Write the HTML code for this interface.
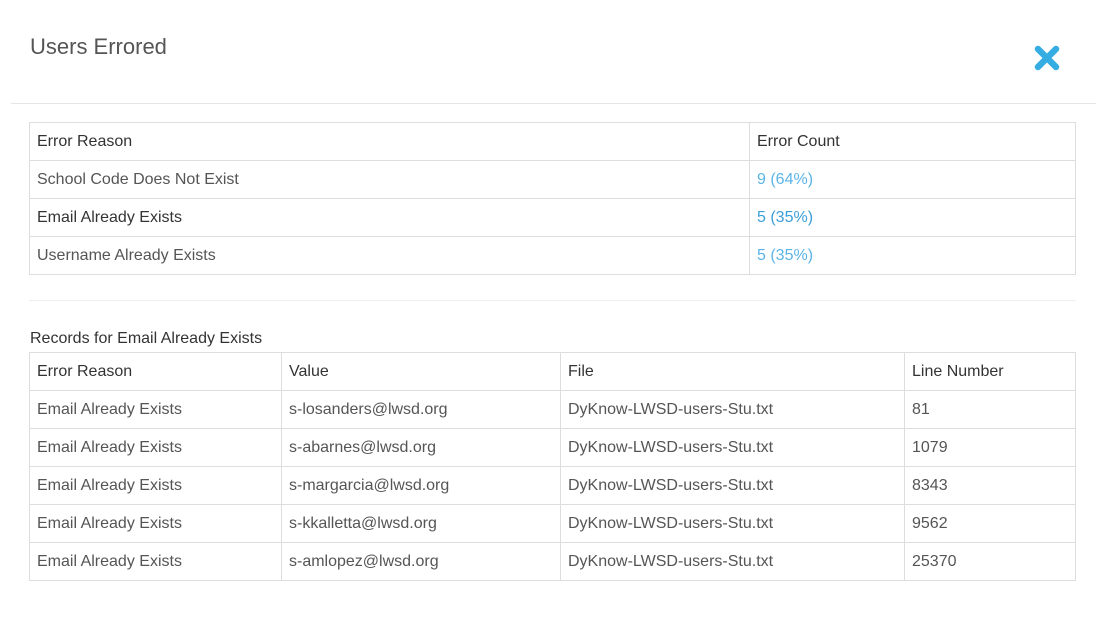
<!DOCTYPE html>
<html><head><meta charset="utf-8"><style>
*{margin:0;padding:0;box-sizing:border-box}
body{width:1105px;height:632px;background:#fff;font-family:"Liberation Sans",sans-serif;position:relative;overflow:hidden}
.title{position:absolute;left:30px;top:34px;font-size:22px;color:#555;font-weight:normal}
.hr{position:absolute;height:1px;background:#e5e5e5}
table{position:absolute;border-collapse:collapse;font-size:16px}
td{border:1px solid #ddd;height:38px;padding:0 7px;color:#555;vertical-align:middle}
tr.h td{color:#333}
.b{color:#333!important}
.blue{color:#5bb4e6!important}
.blue2{color:#3a9fd8!important}
.cap{position:absolute;left:30px;top:330px;font-size:16px;color:#333}
</style></head><body>
<div class="title">Users Errored</div>
<svg style="position:absolute;left:1034px;top:45px" width="26" height="26" viewBox="0 0 26 26"><path d="M4 4L22 22M22 4L4 22" stroke="#35ade3" stroke-width="6.5" stroke-linecap="round"/></svg>
<div class="hr" style="left:11px;top:103px;width:1085px"></div>
<table style="left:29px;top:122px;width:1047px">
<tr class="h"><td style="width:720px">Error Reason</td><td>Error Count</td></tr>
<tr><td>School Code Does Not Exist</td><td class="blue">9 (64%)</td></tr>
<tr><td class="b">Email Already Exists</td><td class="blue2">5 (35%)</td></tr>
<tr><td>Username Already Exists</td><td class="blue">5 (35%)</td></tr>
</table>
<div class="hr" style="left:29px;top:300px;width:1047px;background:#eee"></div>
<div class="cap">Records for Email Already Exists</div>
<table style="left:29px;top:352px;width:1047px">
<tr class="h"><td style="width:252px">Error Reason</td><td style="width:279px">Value</td><td style="width:344px">File</td><td>Line Number</td></tr>
<tr><td>Email Already Exists</td><td>s-losanders@lwsd.org</td><td>DyKnow-LWSD-users-Stu.txt</td><td>81</td></tr>
<tr><td>Email Already Exists</td><td>s-abarnes@lwsd.org</td><td>DyKnow-LWSD-users-Stu.txt</td><td>1079</td></tr>
<tr><td>Email Already Exists</td><td>s-margarcia@lwsd.org</td><td>DyKnow-LWSD-users-Stu.txt</td><td>8343</td></tr>
<tr><td>Email Already Exists</td><td>s-kkalletta@lwsd.org</td><td>DyKnow-LWSD-users-Stu.txt</td><td>9562</td></tr>
<tr><td>Email Already Exists</td><td>s-amlopez@lwsd.org</td><td>DyKnow-LWSD-users-Stu.txt</td><td>25370</td></tr>
</table>
</body></html>
